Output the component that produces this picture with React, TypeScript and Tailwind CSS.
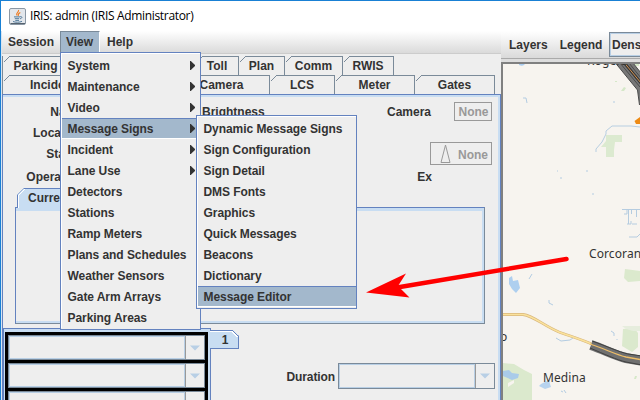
import React from "react";

const views = [
  { name: "System", sub: true },
  { name: "Maintenance", sub: true },
  { name: "Video", sub: true },
  { name: "Message Signs", sub: true },
  { name: "Incident", sub: true },
  { name: "Lane Use", sub: true },
  { name: "Detectors" },
  { name: "Stations" },
  { name: "Ramp Meters" },
  { name: "Plans and Schedules" },
  { name: "Weather Sensors" },
  { name: "Gate Arm Arrays" },
  { name: "Parking Areas" },
];

const signs = [
  "Dynamic Message Signs",
  "Sign Configuration",
  "Sign Detail",
  "DMS Fonts",
  "Graphics",
  "Quick Messages",
  "Beacons",
  "Dictionary",
  "Message Editor",
];

function MenuItem({ name, sub, active }: { name: string; sub?: boolean; active?: boolean }) {
  return (
    <div
      className={
        "flex h-[21px] items-center justify-between border-y pr-[5px] pl-[5.5px] leading-[17px] tracking-[-0.06px] " +
        (active ? "border-t-[#6382bf] border-b-white bg-[#a3b8cc]" : "border-transparent")
      }
    >
      <span className="pt-[2px]">{name}</span>
      {sub && (
        <svg width="5" height="9" viewBox="0 0 5 9">
          <path d="M0 0H0.8L5 4V5L0.8 9H0Z" fill="#333" />
        </svg>
      )}
    </div>
  );
}

function Tab({ label, width }: { label: string; width: string }) {
  return (
    <div className={"relative flex h-[19px] shrink-0 items-center justify-center border-r border-[#7a8a99] pt-px " + width}>
      <svg className="absolute top-0 left-0" width="8" height="8" shapeRendering="crispEdges">
        <path d="M0.5 6.5L6.5 0.5H8" fill="none" stroke="#7a8a99" />
      </svg>
      <i className="absolute top-0 right-0 left-[7px] h-px bg-[#7a8a99]" />
      <span>{label}</span>
    </div>
  );
}

function Combo({ className }: { className: string }) {
  return (
    <div className={"flex border border-[#7a8a99] bg-[#eee] " + className}>
      <div className="flex-1 border border-[#b8cfe5]" />
      <div className="flex w-[19px] items-center justify-center border-l border-[#999]">
        <svg width="10" height="6" viewBox="0 0 10 6">
          <path d="M0 0.5H10L5 5.5Z" fill="#b8cfe5" />
        </svg>
      </div>
    </div>
  );
}

function JavaIcon() {
  return (
    <svg width="17" height="17" viewBox="0 0 17 17" fill="none">
      <rect x="0.5" y="0.5" width="16" height="16" rx="1.5" fill="#e3e7ec" stroke="#8b98a5" />
      <path d="M1.5 15.5H16" stroke="#56636f" />
      <path d="M9.5 2C10.5 4 6 5 8 7.5M11.3 4.5C9 5.6 8.7 6.3 9.4 8" stroke="#ee7b22" strokeWidth="1.1" />
      <path d="M5 8.9H11M11 8.7C14 8.2 13 10.6 11 10.7M5.8 10.7H10.2M6.3 12.4H10M4 13.5C6 14.5 11 14.5 13 13.3" stroke="#527a9b" strokeWidth="1" />
    </svg>
  );
}

function MapView() {
  return (
    <div className="relative min-h-0 flex-1 overflow-hidden border-t-2 border-l-2 border-[#808080] bg-[#f7f4ef]">
      <svg className="block" width="137" height="337" viewBox="503 64 137 337" fill="none">
        <path d="M519 64H525Q523 67 519 65Z" fill="#aacdf0" />
        <path d="M523 98H526L527 103M613 102H615M560 178H562M557 171H558M587 170V172M593 193V195" stroke="#b3cce2" />
        <path d="M596 152V149L602 142L606 134V131L612 126H631L640 127" stroke="#b7cee1" />
        <path d="M606 135H622V142H615L614 150V157H606V147H601L606 141Z" fill="#dcead0" />
        <path d="M621 91L624 87L626 88L624 91ZM634 64H639V66H635ZM615 81H617V82H615Z" fill="#d5e8c8" />
        <path d="M615.5 63H633L641 73V108L639.5 104L637.5 90Z" fill="#777" />
        <path d="M615.5 63L637.5 90L639.5 105M633 63L641 73M620 63L640 87M629 63L641 78" stroke="#4a4a4a" />
        <path d="M624.5 63L641 83" stroke="#353535" strokeWidth="3" />
        <path d="M624.5 63L641 83" stroke="#d49350" />
        <path d="M634.5 121L640 117V124H636Z" fill="#ee8a13" />
        <path d="M622 209.5H640M628.5 209V224M631.5 209V214M636.5 210V217M632 224H637M627 210V214H624M631 221V224H627" stroke="#b5cce0" />
        <path d="M629 237L637 237L640 234" stroke="#b5cce0" />
        <path d="M625 269L640 271V281L628 282L624 278ZM623 329L634 328L638 333V347L632 352L622 346Z" fill="#dbe9cd" />
        <path d="M503 363L514 364L524 370L532 374V401H503Z" fill="#dbe9cd" />
        <path d="M622 326H640V331H633L626 329Z" fill="#e6eddd" />
        <path d="M512 276L513 281L518 280L520 288L516 293L512 289L509 284V278Z" fill="#aecfef" />
        <path d="M529 279L532 274M549 300V303L553 305M556 338L561 341L570 340L573 338M611 331L614 333V336M617 339V340" stroke="#b3cce2" />
        <path d="M503 371L509 370L512 373L519 374L518 378L512 380L503 376Z" fill="#a9cbe9" />
        <path d="M508 383L514 380V383L508 387Z" fill="#f7f4ef" />
        <path d="M545 382L549 380L550 384L551 387L545 389L539 386L541 384Z" fill="#b7d3ee" />
        <path d="M561 391L563 392M564 390L566 393" stroke="#b3cce2" />
        <path d="M635 376H637L636 379H634Z" fill="#d5e8c8" />
        <path d="M503 314.5H523C534 316 544 326 559 332C570 336 583 340 594 345" stroke="#d9b67b" strokeWidth="2.8" />
        <path d="M503 314.5H523C534 316 544 326 559 332C570 336 583 340 594 345" stroke="#fae29c" strokeWidth="1.5" />
        <path d="M591 345C605 350 617 356 626 358L643 361" stroke="#707070" strokeWidth="10" />
        <path d="M592 341C606 346 619 352 628 354L642 356M590 348C604 354 617 360 626 362L642 365" stroke="#404040" strokeWidth="1" />
        <path d="M590 344C605 349 617 355 626 357L643 360" stroke="#efbe68" strokeWidth="1.3" />
      </svg>
      <div className="absolute inset-0 font-['Noto_Sans',sans-serif] text-[12px] leading-[16px] font-normal tracking-[0.1px] text-[#333]">
        <span className="absolute -top-[11px] left-[84px]">Rogers</span>
        <span className="absolute top-[182px] left-[86px]">Corcoran</span>
        <span className="absolute top-[265px] -left-[3px]">o</span>
        <span className="absolute top-[306px] left-[40px]">Medina</span>
      </div>
    </div>
  );
}

export default function App() {
  return (
    <div className="relative flex h-[400px] w-[640px] flex-col overflow-hidden border-t border-l border-t-[#1980d4] border-l-[#1980d4] bg-[#eee] font-['Liberation_Sans',Arial,sans-serif] text-[12px] leading-[14px] font-bold whitespace-nowrap text-[#333]">
      <header className="flex h-[30px] shrink-0 items-center gap-[4px] bg-white pl-[8px] font-['Open_Sans',sans-serif] text-[12px] font-normal tracking-[-0.33px] text-black">
        <JavaIcon />
        <span>IRIS: admin (IRIS Administrator)</span>
      </header>
      <main className="flex min-h-0 flex-1">
        <div className="flex w-[500px] shrink-0 flex-col border-l border-[#d8e5f2]">
          <nav className="flex h-[22px] shrink-0 bg-linear-to-b from-white to-[#dadada]">
            <span className="w-[58px] pt-[4px] pl-[6px]">Session</span>
            <span className="w-[40px] border-t border-r border-l border-t-[#7a8a99] border-r-white border-l-[#7a8a99] bg-[#a3b8cc] pt-[3px] pl-[5px]">View</span>
            <span className="pt-[4px] pl-[7px]">Help</span>
          </nav>
          <div className="h-px shrink-0 bg-[#ccc]" />
          <div className="mt-[2px] flex shrink-0 border-l border-[#7a8a99]">
            <Tab label="Parking" width="w-[66px]" />
            <Tab label="Lane" width="w-[58px]" />
            <Tab label="Alert" width="w-[69px]" />
            <Tab label="Toll" width="w-[43px]" />
            <Tab label="Plan" width="w-[46px]" />
            <Tab label="Comm" width="w-[58px]" />
            <Tab label="RWIS" width="w-[51px]" />
          </div>
          <div className="flex shrink-0 border-l border-[#7a8a99]">
            <Tab label="Incident" width="w-[101px]" />
            <Tab label="DMS" width="w-[70px]" />
            <Tab label="Camera" width="w-[96px]" />
            <Tab label="LCS" width="w-[65px]" />
            <Tab label="Meter" width="w-[80px]" />
            <Tab label="Gates" width="w-[80px]" />
          </div>
          <section className="flex min-h-0 flex-1 flex-col border-t border-r border-l border-[#6382bf]">
            <div className="flex min-h-0 flex-1 flex-col border-t-2 border-r-2 border-[#c8ddf2]">
              <div className="flex h-[91px] shrink-0">
                <div className="flex w-[80px] flex-col items-end pt-[5px] leading-[21px]">
                  <span>Name</span>
                  <span>Location</span>
                  <span>Status</span>
                  <span className="pt-[2px]">Operation</span>
                </div>
                <span className="pt-[5px] pl-[119px] leading-[21px]">Brightness</span>
                <div className="ml-auto flex flex-col items-end pr-[6px]">
                  <div className="mt-[5px] flex items-center">
                    <span className="pt-px">Camera</span>
                    <div className="ml-[23px] flex h-[19px] w-[38px] items-center justify-center border border-[#999] pt-px pl-px text-[#999]">None</div>
                  </div>
                  <div className="mt-[21px] flex h-[23px] w-[62px] items-center justify-between border border-[#999] pr-[3px] pl-[9px] text-[#999]">
                    <svg width="11" height="19" viewBox="0 0 11 19">
                      <path d="M1 18.5L5.5 1L10 18.5Z" fill="none" stroke="#999" />
                    </svg>
                    <span className="pt-[2px]">None</span>
                  </div>
                  <span className="mt-[5px] mr-[60px]">Ex</span>
                </div>
              </div>
              <div className="relative z-10 ml-[14px] h-[20px] w-[90px] shrink-0 bg-[#c8ddf2] pt-[3px] pl-[11px] [clip-path:polygon(7px_0,100%_0,100%_100%,0_100%,0_7px)]">
                Current
                <svg className="absolute top-0 left-0" width="90" height="20" fill="none" shapeRendering="crispEdges">
                  <path d="M0.5 20V6.5L6.5 0.5H90" stroke="#6382bf" />
                  <path d="M1.5 20V7.5L7.5 1.5" stroke="white" />
                </svg>
              </div>
              <div className="-mt-px mr-[13px] ml-[12px] h-[117px] shrink-0 border border-t-[#6382bf] border-r-[#7a8a99] border-b-[#7a8a99] border-l-[#6382bf]">
                <div className="h-full border-t-[3px] border-r-2 border-b-2 border-[#c8ddf2]" />
              </div>
              <div className="mt-[4px] flex min-h-0 flex-1">
                <div className="w-[208px] shrink-0 border-t border-r border-l border-[#6382bf]">
                  <div className="h-full border-t-[3px] border-r-2 border-l border-[#c8ddf2]">
                    <div className="flex h-full flex-col gap-[3px] overflow-hidden bg-black px-[3px] pt-[3px]">
                      <Combo className="h-[25px] shrink-0" />
                      <Combo className="h-[25px] shrink-0" />
                      <Combo className="h-[25px] shrink-0" />
                    </div>
                  </div>
                </div>
                <div className="relative -ml-px mt-[2px] flex h-[19px] w-[29px] shrink-0 items-center justify-center border-r border-b border-[#6382bf] bg-[#c8ddf2] pt-px pl-[2px] [clip-path:polygon(0_0,23px_0,29px_6px,29px_100%,0_100%)]">
                  1
                  <svg className="absolute top-0 left-0" width="29" height="10" fill="none" shapeRendering="crispEdges">
                    <path d="M0 0.5H22.5L28.5 6.5V10" stroke="#6382bf" />
                    <path d="M0 1.5H22L27.5 7" stroke="white" />
                  </svg>
                </div>
                <div className="flex flex-1 justify-end gap-[3px] pt-[35px] pr-[3px]">
                  <span className="pt-[7px] tracking-[-0.1px]">Duration</span>
                  <Combo className="h-[26px] w-[157px]" />
                </div>
              </div>
            </div>
          </section>
        </div>
        <div className="flex min-w-0 flex-1 flex-col">
          <div className="flex h-[28px] shrink-0 border-b border-[#aaa] bg-linear-to-b from-white to-[#dadada]">
            <span className="pt-[7px] pl-[8px]">Layers</span>
            <span className="pt-[7px] pl-[12px]">Legend</span>
            <div className="mt-[1px] ml-auto h-[25px] w-[31px] overflow-hidden border border-r-0 border-[#7a8a99]">
              <div className="h-full border border-r-0 border-[#b8cfe5] bg-[#eee] pt-[4px] pl-px">Density</div>
            </div>
          </div>
          <div className="h-[3px] shrink-0 bg-[#ddd]" />
          <MapView />
        </div>
      </main>
      <div className="absolute top-[51px] left-[59px] z-20 h-[278px] w-[141px] border border-[#6382bf] bg-[#eee]">
        <div className="border-t border-l border-white pt-px">
          {views.map((v) => (
            <MenuItem key={v.name} name={v.name} sub={v.sub} active={v.name === "Message Signs"} />
          ))}
        </div>
      </div>
      <div className="absolute top-[114px] left-[195px] z-30 h-[194px] w-[161px] border border-[#6382bf] bg-[#eee]">
        <div className="border-t border-l border-white pt-px">
          {signs.map((s) => (
            <MenuItem key={s} name={s} active={s === "Message Editor"} />
          ))}
        </div>
      </div>
      <svg className="absolute -top-px -left-px z-40" width="640" height="400" fill="none">
        <path d="M566.5 259L397 287.5" stroke="#f00" strokeWidth="4.5" strokeLinecap="round" />
        <path d="M366 292.5L406 273.5L398 286L409.5 297.5Z" fill="#f00" />
      </svg>
    </div>
  );
}
